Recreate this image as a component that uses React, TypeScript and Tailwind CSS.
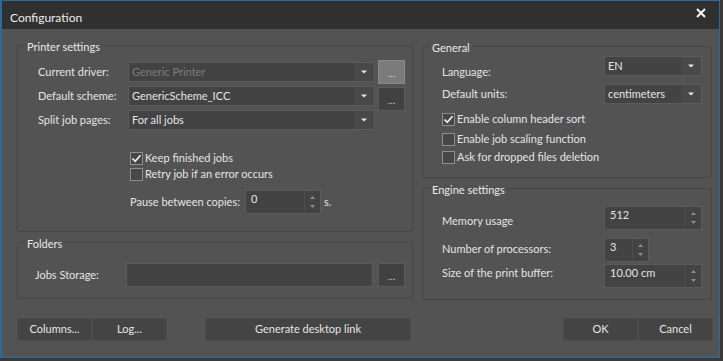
import React from "react";

const font = "font-['Segoe_UI','Lato','Liberation_Sans',sans-serif]";

function Arrow() {
  return (
    <svg width="6" height="4" viewBox="0 0 6 4">
      <path d="M0 0.5H6L3 3.5Z" fill="#e8e8e8" />
    </svg>
  );
}

function Combo({ value, width, disabled }: { value: string; width: string; disabled?: boolean }) {
  return (
    <div className={`flex h-[20px] ${width} border border-[#5b5b5b] bg-[#434343]`}>
      <span
        className={`flex-1 pl-[3px] text-[11px] leading-[18px] ${
          disabled ? "text-[#7c7c7c]" : "text-[#e4e4e4]"
        }`}
      >
        {value}
      </span>
      <span className="flex w-[20px] items-center justify-center bg-[#494949]">
        <Arrow />
      </span>
    </div>
  );
}

function Spin({ value, width }: { value: string; width: string }) {
  return (
    <div className={`flex h-[24px] ${width} border border-[#5b5b5b] bg-[#434343]`}>
      <span className="flex-1 pl-[5px] pt-[1px] text-[11px] leading-[14px] text-[#e4e4e4]">{value}</span>
      <span className="flex w-[16px] flex-col items-center justify-center gap-[6px] border-l border-[#4b4b4b]">
        <svg width="5" height="3" viewBox="0 0 5 3">
          <path d="M0 3H5L2.5 0Z" fill="#8d8d8d" />
        </svg>
        <svg width="5" height="3" viewBox="0 0 5 3">
          <path d="M0 0H5L2.5 3Z" fill="#8d8d8d" />
        </svg>
      </span>
    </div>
  );
}

function Check({ label, checked, className = "" }: { label: string; checked?: boolean; className?: string }) {
  return (
    <div className={`flex h-[16px] items-center ${className}`}>
      <span className="flex h-[13px] w-[13px] items-center justify-center border border-[#8e8e8e] bg-[#474747]">
        {checked && (
          <svg width="11" height="11" viewBox="0 0 11 11">
            <path d="M1.5 5.5L4.2 8.3L9.5 2.2" fill="none" stroke="#f2f2f2" strokeWidth="1.6" />
          </svg>
        )}
      </span>
      <span className="ml-[2px] text-[11px] leading-[14px] text-[#e4e4e4]">{label}</span>
    </div>
  );
}

function Dots({ hot }: { hot?: boolean }) {
  return (
    <div
      className={`flex h-[24px] w-[27px] items-end justify-center pb-[5px] text-[10px] leading-[10px] ${
        hot ? "border border-[#8a8a8a] bg-[#7b7b7b] text-[#d8d8d8]" : "border border-[#5b5b5b] bg-[#414141] text-[#d0d0d0]"
      }`}
    >
      ...
    </div>
  );
}

function Frame({ title, className, children }: { title: string; className: string; children?: React.ReactNode }) {
  return (
    <div className={`relative rounded-[2px] border border-[#464646] ${className}`}>
      <span className="absolute -top-[6px] left-[7px] bg-[#535353] px-[2px] text-[11px] leading-[14px] text-[#e8e8e8]">
        {title}
      </span>
      {children}
    </div>
  );
}

function Btn({ label, width, className = "" }: { label: string; width: string; className?: string }) {
  return (
    <div
      className={`flex h-[23px] ${width} items-center justify-center border border-[#4d4d4d] bg-[#444444] text-[11px] text-[#e4e4e4] ${className}`}
    >
      {label}
    </div>
  );
}

const Label = ({ children, className = "" }: { children: React.ReactNode; className?: string }) => (
  <span className={`text-[11px] leading-[14px] text-[#e4e4e4] ${className}`}>{children}</span>
);

export default function App() {
  return (
    <div className={`h-[361px] w-[723px] overflow-hidden bg-[#3a3a3a] ${font}`}>
      <div className="flex h-[358px] w-[720px] flex-col border border-l-2 border-[#2d6a9c]">
        {/* Title bar */}
        <div className="flex h-[28px] items-start justify-between bg-[#303030] pl-[8px] pr-[13px] pt-[10px]">
          <span className="text-[12px] leading-[14px] text-[#ececec]">Configuration</span>
          <svg width="10" height="10" viewBox="0 0 10 10" className="-mt-[3px]">
            <path d="M1 1L9 9M9 1L1 9" stroke="#f4f4f4" strokeWidth="2" />
          </svg>
        </div>

        <div className="flex flex-1 flex-col bg-[#535353] pl-[15px] pt-[16px]">
          <div className="flex">
            {/* Left column */}
            <div className="flex w-[396px] flex-col">
              <Frame title="Printer settings" className="h-[187px]">
                <div className="flex flex-col pl-[20px] pt-[14px]">
                  <div className="flex h-[24px] items-center">
                    <Label className="w-[90px]">Current driver:</Label>
                    <Combo value="Generic Printer" width="w-[247px]" disabled />
                    <div className="ml-[3px] self-start">
                      <Dots hot />
                    </div>
                  </div>
                  <div className="flex h-[24px] items-center">
                    <Label className="w-[90px]">Default scheme:</Label>
                    <Combo value="GenericScheme_ICC" width="w-[247px]" />
                    <div className="ml-[3px] mt-[3px] self-start">
                      <Dots />
                    </div>
                  </div>
                  <div className="flex h-[24px] items-center">
                    <Label className="w-[90px]">Split job pages:</Label>
                    <Combo value="For all jobs" width="w-[247px]" />
                  </div>
                  <div className="mt-[18px] flex flex-col pl-[92px]">
                    <Check label="Keep finished jobs" checked />
                    <Check label="Retry job if an error occurs" />
                    <div className="mt-[8px] flex items-center">
                      <Label className="w-[115px]">Pause between copies:</Label>
                      <Spin value="0" width="w-[76px]" />
                      <Label className="ml-[3px]">s.</Label>
                    </div>
                  </div>
                </div>
              </Frame>
              <Frame title="Folders" className="mt-[10px] h-[57px]">
                <div className="flex items-center pl-[17px] pt-[20px]">
                  <Label className="w-[91px]">Jobs Storage:</Label>
                  <div className="h-[24px] w-[247px] border border-[#5b5b5b] bg-[#434343]" />
                  <div className="ml-[5px]">
                    <Dots />
                  </div>
                </div>
              </Frame>
            </div>

            {/* Right column */}
            <div className="ml-[9px] flex w-[290px] flex-col">
              <Frame title="General" className="mt-[1px] h-[132px]">
                <div className="flex flex-col pl-[19px] pt-[9px]">
                  <div className="flex items-start">
                    <Label className="mt-[9px] w-[162px]">Language:</Label>
                    <Combo value="EN" width="w-[98px]" />
                  </div>
                  <div className="mt-[5px] flex items-center">
                    <Label className="w-[162px]">Default units:</Label>
                    <Combo value="centimeters" width="w-[98px]" />
                  </div>
                  <Check label="Enable column header sort" checked className="mt-[7px]" />
                  <Check label="Enable job scaling function" className="mt-[4px]" />
                  <Check label="Ask for dropped files deletion" className="mt-[2px]" />
                </div>
              </Frame>
              <Frame title="Engine settings" className="mt-[10px] h-[112px]">
                <div className="flex flex-col pl-[19px] pt-[17px]">
                  <div className="flex items-start">
                    <Label className="mt-[8px] w-[162px]">Memory usage</Label>
                    <Spin value="512" width="w-[98px]" />
                  </div>
                  <div className="mt-[8px] flex items-start">
                    <Label className="mt-[4px] w-[162px]">Number of processors:</Label>
                    <Spin value="3" width="w-[45px]" />
                  </div>
                  <div className="mt-[2px] flex items-start">
                    <Label className="mt-[2px] w-[162px]">Size of the print buffer:</Label>
                    <Spin value="10.00 cm" width="w-[98px]" />
                  </div>
                </div>
              </Frame>
            </div>
          </div>

          {/* Buttons */}
          <div className="mt-[18px] flex">
            <Btn label="Columns..." width="w-[75px]" />
            <Btn label="Log..." width="w-[75px]" />
            <Btn label="Generate desktop link" width="w-[206px]" className="ml-[38px]" />
            <Btn label="OK" width="w-[75px]" className="ml-[152px]" />
            <Btn label="Cancel" width="w-[75px]" />
          </div>
        </div>
      </div>
    </div>
  );
}
